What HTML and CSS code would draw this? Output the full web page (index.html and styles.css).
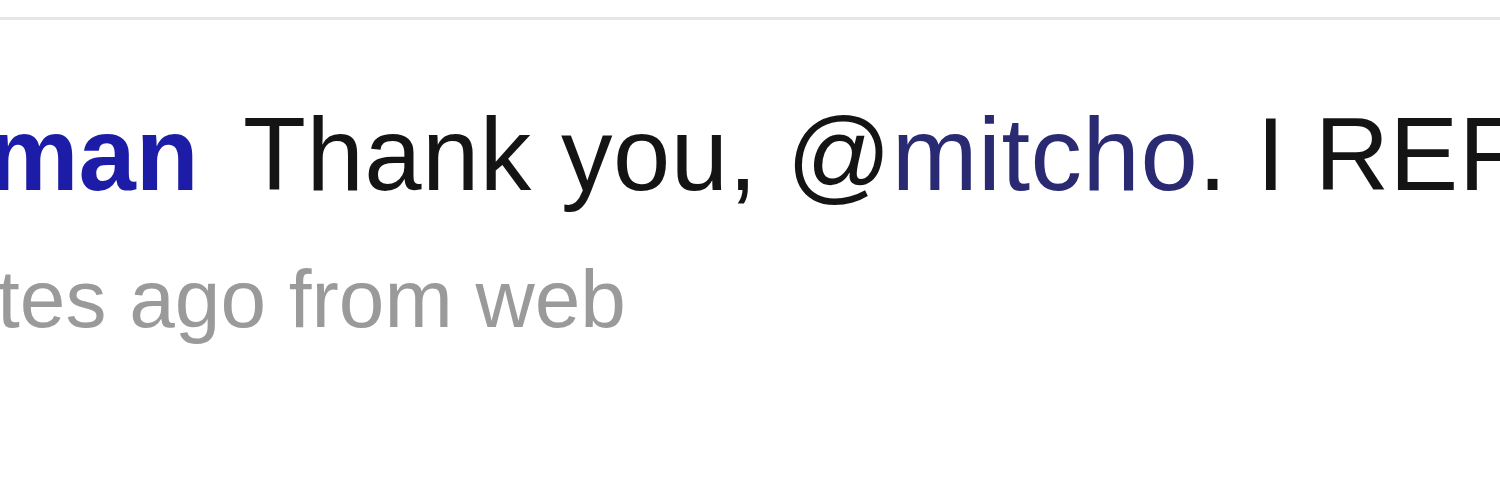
FILE: index.html
```html
<!DOCTYPE html>
<html>
<head>
<meta charset="utf-8">
<link rel="stylesheet" href="styles.css">
</head>
<body>
<div class="rule"></div>
<div class="tweet">
  <p class="text"><a class="name" href="#">man</a> Thank you, @<a class="mention" href="#">mitcho</a>. I REF</p>
  <p class="meta">tes ago from web</p>
</div>
</body>
</html>
```
FILE: styles.css
```css
html, body {
  margin: 0;
  padding: 0;
  background: #ffffff;
  overflow: hidden;
}
body {
  width: 1500px;
  height: 500px;
  font-family: "Liberation Sans", Arial, sans-serif;
}
.rule {
  margin-top: 17px;
  height: 3px;
  background: #e6e6e6;
}
.tweet {
  padding-top: 83px;
  white-space: nowrap;
}
.text {
  margin: 0 0 0 -13px;
  font-size: 103px;
  line-height: 103px;
  color: #141414;
  letter-spacing: 0.5px;
}
.name {
  font-weight: bold;
  color: #1c1ca6;
  text-decoration: none;
  letter-spacing: 0;
  margin-right: 17px;
}
.mention {
  color: #2a2a72;
  text-decoration: none;
}
.meta {
  margin: 52px 0 0 -3px;
  font-size: 82px;
  line-height: 82px;
  color: #9a9a9a;
}
```
